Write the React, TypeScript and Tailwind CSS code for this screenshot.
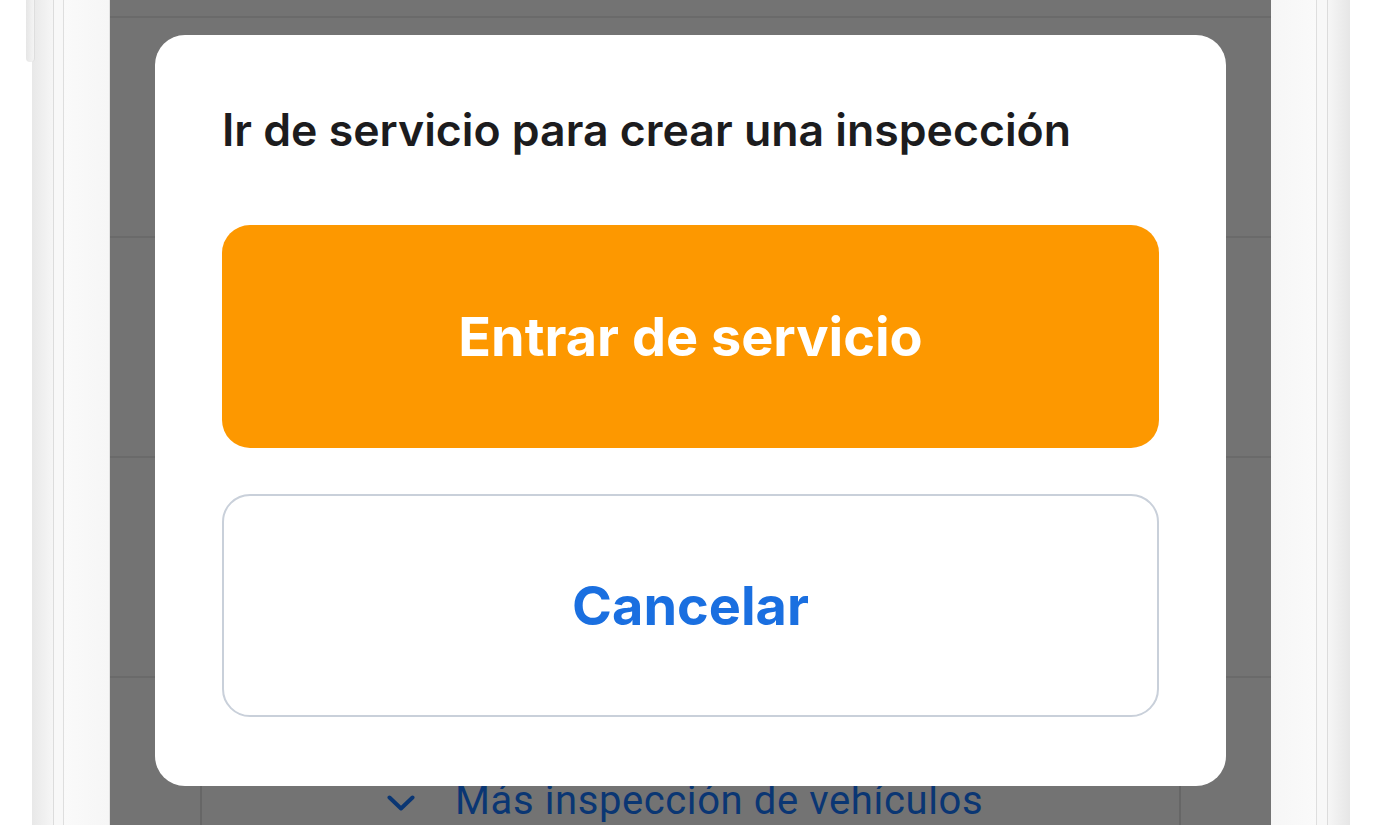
function Row() {
  return <div className="h-[220px] shrink-0 border-b-2 border-[#ebebeb] bg-white" />;
}

export default function App() {
  return (
    <div className="relative flex h-[825px] w-[1388px] overflow-hidden bg-white font-['Inter',sans-serif]">
      {/* left phone frame */}
      <div className="relative flex h-full w-[110px] shrink-0">
        <div className="w-[32px] shrink-0 bg-white" />
        <div className="absolute left-[26px] top-0 h-[62px] w-[9px] rounded-b-[4px] border-r border-[#dedede] bg-gradient-to-r from-[#e6e6e6] to-[#f4f4f4]" />
        <div className="w-[21px] shrink-0 bg-gradient-to-r from-[#e8e8e8] to-[#f6f6f6]" />
        <div className="w-[1px] shrink-0 bg-[#dcdcdc]" />
        <div className="w-[9px] shrink-0 bg-[#f8f8f8]" />
        <div className="w-[1px] shrink-0 bg-[#dedede]" />
        <div className="flex-1 bg-gradient-to-r from-[#fafafa] to-[#f6f6f6]" />
        <div className="w-[1px] shrink-0 bg-[#e2e2e2]" />
      </div>

      {/* screen */}
      <div className="relative h-full w-[1161px] shrink-0 overflow-hidden bg-white">
        <div className="flex flex-col">
          <div className="-mt-[202px] flex flex-col">
            <Row />
            <Row />
            <Row />
            <Row />
          </div>
          <div className="mx-[90px] mt-[55px] flex h-[120px] items-start gap-[40px] rounded-[16px] border-2 border-[#e2e2e2] bg-white pl-[185px] pt-[42px]">
            <svg width="28" height="16" viewBox="0 0 28 16" className="mt-[18px] shrink-0" fill="none">
              <polyline points="2.5,2.5 14,13.5 25.5,2.5" stroke="#1878ff" strokeWidth="4" strokeLinecap="round" strokeLinejoin="round" />
            </svg>
            <span className="font-['Roboto',sans-serif] text-[40px] leading-[48px] tracking-[0.6px] text-[#1878ff]">
              Más inspección de vehículos
            </span>
          </div>
        </div>

        {/* overlay */}
        <div className="absolute inset-0 bg-black/[0.55]" />

        {/* dialog */}
        <div className="absolute left-[45px] top-[35px] flex w-[1071px] flex-col rounded-[30px] bg-white px-[67px] pb-[69px] pt-[69px]">
          <h2 className="text-[44.6px] font-semibold leading-[52px] text-[#1c1c1e]">
            Ir de servicio para crear una inspección
          </h2>
          <button className="mt-[69px] flex h-[223px] items-center justify-center rounded-[28px] bg-[#fd9800] text-[54px] font-bold text-white">
            Entrar de servicio
          </button>
          <button className="mt-[46px] flex h-[223px] items-center justify-center rounded-[28px] border-2 border-[#c9d0da] bg-white text-[54px] font-bold text-[#1a6fe0]">
            Cancelar
          </button>
        </div>
      </div>

      {/* right phone frame */}
      <div className="flex h-full flex-1">
        <div className="w-[45px] shrink-0 bg-gradient-to-r from-[#f6f6f6] to-[#fafafa]" />
        <div className="w-[1px] shrink-0 bg-[#dedede]" />
        <div className="w-[10px] shrink-0 bg-[#f8f8f8]" />
        <div className="w-[1px] shrink-0 bg-[#dcdcdc]" />
        <div className="w-[22px] shrink-0 bg-gradient-to-r from-[#f6f6f6] to-[#e6e6e6]" />
        <div className="flex-1 bg-white" />
      </div>
    </div>
  );
}
